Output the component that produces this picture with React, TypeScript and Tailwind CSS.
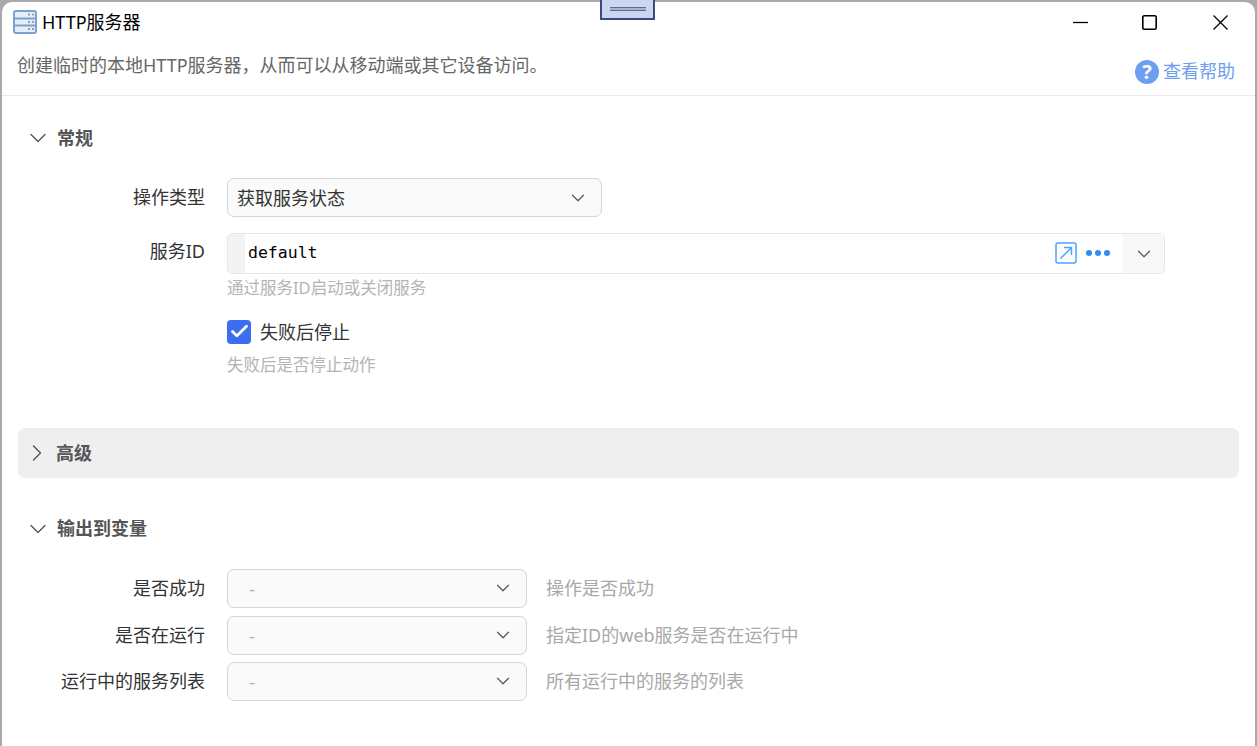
import { ChevronDown, ChevronRight, Check } from 'lucide-react';

const font = "[font-family:'Noto_Sans','Noto_Sans_CJK_SC',sans-serif]";

function ServerIcon() {
  return (
    <svg width="24" height="24" viewBox="0 0 24 24" fill="none">
      <rect x="1" y="1" width="22" height="22" rx="2" fill="#e8eef7" stroke="#7ba1cf" strokeWidth="2" />
      <path d="M1 8.5h22M1 15.5h22" stroke="#7ba1cf" strokeWidth="2" />
      <path d="M15 4.5h2M19 4.5h2M15 12h2M19 12h2M15 19h2M19 19h2" stroke="#8a9fb8" strokeWidth="2" />
    </svg>
  );
}

function Section({ title, children }: { title: string; children: React.ReactNode }) {
  return (
    <div>
      <div className="h-[50px] flex items-center pl-[22px]">
        <ChevronDown className="w-[28px] h-[28px] text-[#555]" strokeWidth={1.15} />
        <span className="ml-[5px] text-[18px] font-bold text-[#555]">{title}</span>
      </div>
      {children}
    </div>
  );
}

function OutputRow({ label, hint, className }: { label: string; hint: string; className?: string }) {
  return (
    <div className={`flex items-center h-[39px] ${className ?? ''}`}>
      <div className="w-[203px] text-right text-[18px] text-[#333]">{label}</div>
      <div className="ml-[22px] w-[300px] h-[39px] rounded-[7px] border border-[#d4d4d8] bg-[#fafafa] flex items-center justify-between pl-[21px] pr-[12px] text-[#b0b0b0] text-[18px]">
        <span className="[font-family:'Noto_Sans_CJK_SC',sans-serif]">-</span>
        <ChevronDown className="w-[22px] h-[22px] text-[#555]" strokeWidth={1.3} />
      </div>
      <div className="ml-[19px] text-[18px] text-[#a8a8a8]">{hint}</div>
    </div>
  );
}

export default function App() {
  return (
    <div className={`w-[1257px] h-[746px] overflow-hidden bg-[#a9a9a9] pl-[2px] pt-[2px] pr-[2px] relative ${font}`}>
      {/* drag handle */}
      <div className="absolute left-[600px] top-0 w-[55px] h-[20px] bg-[#ccd6f0] border-2 border-t-0 border-[#3b4a80] flex items-center justify-center z-10">
        <div className="w-[36px] h-[4px] border-y border-[#5b6c8f] bg-[#a9b5c9]" />
      </div>

      <div className="h-full bg-white rounded-t-[10px]">
        {/* title bar */}
        <div className="h-[40px] flex items-center pl-[11px]">
          <ServerIcon />
          <span className="ml-[5px] text-[18px] text-black">HTTP服务器</span>
          <div className="ml-auto flex items-center pr-[27px] text-black">
            <svg width="15" height="15" viewBox="0 0 15 15" fill="none" stroke="currentColor" strokeWidth="1.3">
              <path d="M0 7.5h15" />
            </svg>
            <svg className="ml-[54px]" width="15" height="15" viewBox="0 0 15 15" fill="none" stroke="currentColor" strokeWidth="1.6">
              <rect x="0.8" y="0.8" width="13.4" height="13.4" rx="1.5" />
            </svg>
            <svg className="ml-[56px]" width="15" height="15" viewBox="0 0 15 15" fill="none" stroke="currentColor" strokeWidth="1.3">
              <path d="M0.5 0.5l14 14M14.5 0.5l-14 14" />
            </svg>
          </div>
        </div>

        {/* description */}
        <div className="h-[54px] border-b border-[#eaeaea] flex pl-[15px] pr-[20px] justify-between">
          <span className="text-[18px] text-[#666] mt-[10px]">创建临时的本地HTTP服务器，从而可以从移动端或其它设备访问。</span>
          <span className="flex items-center gap-[4px] text-[18px] text-[#6d9eef] mt-[16px] self-start">
            <span className="w-[24px] h-[24px] rounded-full bg-[#6d9eef] text-white text-[20px] font-bold flex items-center justify-center">?</span>
            查看帮助
          </span>
        </div>

        <div className="pt-[17px]">
          <Section title="常规">
            <div className="mt-[15px] flex items-center h-[39px]">
              <div className="w-[203px] text-right text-[18px] text-[#333]">操作类型</div>
              <div className="ml-[22px] w-[375px] h-[39px] rounded-[7px] border border-[#d4d4d8] bg-[#fafafa] flex items-center justify-between pl-[9px] pr-[12px] text-[18px] text-[#333]">
                <span className="pt-[2px]">获取服务状态</span>
                <ChevronDown className="w-[22px] h-[22px] text-[#555]" strokeWidth={1.3} />
              </div>
            </div>
            <div className="mt-[16px] flex">
              <div className="w-[203px] text-right text-[18px] text-[#333] mt-[5px]">服务ID</div>
              <div className="ml-[22px] w-[938px]">
                <div className="h-[41px] rounded-[5px] border border-[#e6e6e6] flex items-center overflow-hidden">
                  <div className="w-[17px] h-full bg-[#f3f3f3]" />
                  <span className="ml-[3px] text-[16.5px] text-black [font-family:'DejaVu_Sans_Mono',monospace]">default</span>
                  <div className="ml-auto flex items-center h-full">
                    <svg className="-mt-[2px]" width="22" height="22" viewBox="0 0 22 22" fill="none" stroke="#4da3ff" strokeWidth="1.5">
                      <rect x="1" y="1" width="20" height="20" rx="2" />
                      <path d="M5.5 16.5 16 6M9 5.5h7.5V13" />
                    </svg>
                    <div className="ml-[9px] mr-[13px] -mt-[2px] flex gap-[3px]">
                      <i className="w-[6px] h-[6px] rounded-full bg-[#2b8cf7]" />
                      <i className="w-[6px] h-[6px] rounded-full bg-[#2b8cf7]" />
                      <i className="w-[6px] h-[6px] rounded-full bg-[#2b8cf7]" />
                    </div>
                    <div className="w-[41px] h-full bg-[#f8f8f8] flex items-center justify-center">
                      <ChevronDown className="w-[22px] h-[22px] text-[#555]" strokeWidth={1.3} />
                    </div>
                  </div>
                </div>
                <div className="mt-[2px] text-[16.5px] text-[#b4b4b4]">通过服务ID启动或关闭服务</div>
              </div>
            </div>
            <div className="ml-[225px] mt-[19px] flex items-center h-[24px]">
              <span className="w-[24px] h-[24px] rounded-[4px] bg-[#3b6ff0] flex items-center justify-center">
                <Check className="w-[21px] h-[21px] text-white" strokeWidth={3.2} />
              </span>
              <span className="ml-[9px] pt-[2px] text-[18px] text-[#333]">失败后停止</span>
            </div>
            <div className="ml-[225px] mt-[9px] text-[16.5px] text-[#b4b4b4]">失败后是否停止动作</div>
          </Section>

          <div className="mt-[50px] mx-[16px] h-[50px] rounded-[7px] bg-[#efefef] flex items-center pl-[5px]">
            <ChevronRight className="w-[28px] h-[28px] text-[#555]" strokeWidth={1.15} />
            <span className="ml-[5px] pt-[2px] text-[18px] font-bold text-[#555]">高级</span>
          </div>

          <div className="mt-[26px]">
            <Section title="输出到变量">
              <div className="mt-[15px] flex flex-col">
                <OutputRow label="是否成功" hint="操作是否成功" />
                <OutputRow className="mt-[8px]" label="是否在运行" hint="指定ID的web服务是否在运行中" />
                <OutputRow className="mt-[7px]" label="运行中的服务列表" hint="所有运行中的服务的列表" />
              </div>
            </Section>
          </div>
        </div>
      </div>
    </div>
  );
}
